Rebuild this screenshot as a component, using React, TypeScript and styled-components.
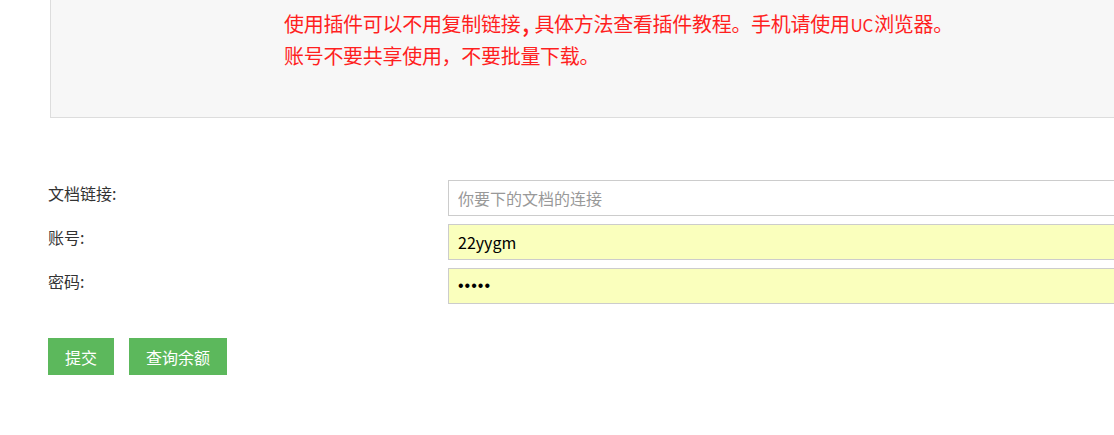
import React from "react";
import styled, { createGlobalStyle } from "styled-components";

const GlobalStyle = createGlobalStyle`
  html, body {
    margin: 0;
    padding: 0;
    background: #fff;
    overflow: hidden;
  }
  body {
    font-family: "Noto Sans CJK SC", "Noto Sans", sans-serif;
    color: #333;
  }
`;

const Page = styled.div`
  width: 1240px;
  padding-left: 48px;
  box-sizing: border-box;
`;

const Notice = styled.div`
  margin-left: 2px;
  background: #f7f7f7;
  border: 1px solid #ddd;
  border-top: 0;
  border-right: 0;
  padding: 8px 0 45px 233px;
`;

const NoticeLine = styled.p`
  margin: 0;
  height: 32px;
  font-size: 20px;
  line-height: 32px;
  letter-spacing: -0.3px;
  color: #ff1f1f;
  white-space: nowrap;
`;

const Punct = styled.span`
  display: inline-block;
  width: 14px;
  line-height: 1;
  font-weight: bold;
  padding-left: 2px;
  box-sizing: border-box;
`;

const Latin = styled.span`
  font-size: 17px;
  margin: 0 1px;
`;

const Form = styled.form`
  margin-top: 62px;
  display: grid;
  grid-template-columns: 400px 1fr;
  row-gap: 8px;
`;

const Label = styled.label`
  font-size: 16px;
  line-height: 26px;
  color: #333;
`;

const Field = styled.input<{ $filled?: boolean; $secret?: boolean }>`
  box-sizing: border-box;
  height: 36px;
  width: 100%;
  border: 1px solid #ccc;
  border-radius: 0;
  padding: 0 9px;
  font-family: ${(p) =>
    p.$secret
      ? '"Liberation Sans", Arial, sans-serif'
      : '"Noto Sans CJK SC", "Noto Sans", sans-serif'};
  font-size: 16px;
  letter-spacing: ${(p) => (p.$secret ? "1px" : "normal")};
  color: #000;
  outline: none;
  background: ${(p) => (p.$filled ? "#faffbd" : "#fff")};
  &::placeholder {
    color: #999;
  }
`;

const Actions = styled.div`
  display: flex;
  gap: 15px;
  margin-top: 34px;
`;

const Button = styled.button`
  height: 37px;
  padding: 0 17px;
  border: 0;
  border-radius: 0;
  background: #5cb85c;
  color: #fff;
  font-family: "Noto Sans CJK SC", "Noto Sans", sans-serif;
  font-size: 16px;
  cursor: pointer;
`;

export default function App() {
  return (
    <>
      <GlobalStyle />
      <Page>
        <Notice>
          <NoticeLine>
            使用插件可以不用复制链接<Punct>,</Punct>具体方法查看插件教程。手机请使用
            <Latin>UC</Latin>浏览器。
          </NoticeLine>
          <NoticeLine>账号不要共享使用，不要批量下载。</NoticeLine>
        </Notice>
        <Form onSubmit={(e) => e.preventDefault()}>
          <Label htmlFor="url">文档链接:</Label>
          <Field id="url" placeholder="你要下的文档的连接" />
          <Label htmlFor="user">账号:</Label>
          <Field id="user" $filled defaultValue="22yygm" />
          <Label htmlFor="pwd">密码:</Label>
          <Field id="pwd" type="password" $filled $secret defaultValue="12345" />
        </Form>
        <Actions>
          <Button type="button">提交</Button>
          <Button type="button">查询余额</Button>
        </Actions>
      </Page>
    </>
  );
}
